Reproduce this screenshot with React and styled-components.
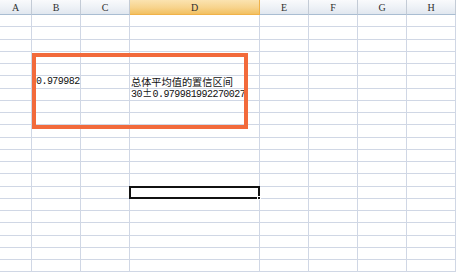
import React from "react";
import styled, { createGlobalStyle } from "styled-components";

const Global = createGlobalStyle`
  html, body { margin: 0; padding: 0; background: #fff; overflow: hidden; }
  * { box-sizing: border-box; }
`;

const Sheet = styled.div`
  position: relative;
  width: 456px;
  height: 273px;
  overflow: hidden;
  background: #fff;
`;

const Grid = styled.div`
  display: grid;
  grid-template-columns: 32px 49px 49px 130px 49px 49px 49px 49px;
  grid-template-rows: 15px repeat(21, 12.25px);
`;

const HeaderCell = styled.div`
  display: flex;
  align-items: center;
  justify-content: center;
  font-family: "Liberation Serif", serif;
  font-size: 10px;
  color: #2f2f2f;
  border-right: 1px solid ${(p) => (p.$active ? "#f0b24a" : "#c3cbd6")};
  border-bottom: 1px solid ${(p) => (p.$active ? "#f0b24a" : "#a9bdd2")};
  background: ${(p) =>
    p.$active
      ? "linear-gradient(#fbe3b0, #f7d38c 55%, #f2c061)"
      : "linear-gradient(#f9fafc, #edf1f6 55%, #e1e7ef)"};
`;

const Cell = styled.div`
  position: relative;
  display: flex;
  align-items: center;
  padding-left: ${(p) => p.$pad}px;
  border-right: 1px solid #d0d7e5;
  border-bottom: 1px solid #d0d7e5;
  white-space: nowrap;
  overflow: visible;
  line-height: 1;
  z-index: ${(p) => (p.$text ? 1 : 0)};
`;

const NumText = styled.span`
  font-family: "Liberation Mono", monospace;
  font-size: 10px;
  letter-spacing: -0.55px;
  line-height: 1;
  color: #111;
`;

const CjkText = styled.span`
  font-family: "Noto Sans CJK SC", sans-serif;
  font-size: 10.2px;
  line-height: 1;
  color: #111;
`;

const PlusMinus = styled.span`
  display: inline-block;
  width: 10.6px;
  text-align: center;
  font-family: "Noto Sans CJK SC", sans-serif;
  font-size: 10px;
  letter-spacing: 0;
`;

const Selection = styled.div`
  position: absolute;
  left: -1px;
  top: -1px;
  right: -1px;
  bottom: -1px;
  border: 2px solid #111;
  pointer-events: none;
`;

const FillHandle = styled.div`
  position: absolute;
  right: -3px;
  bottom: -3px;
  width: 4px;
  height: 4px;
  background: #111;
  border: 1px solid #fff;
`;

const Highlight = styled.div`
  position: absolute;
  left: 32px;
  top: 53px;
  width: 216px;
  height: 76px;
  border: 4px solid #f26a3b;
  pointer-events: none;
  z-index: 2;
`;

const COLS = ["A", "B", "C", "D", "E", "F", "G", "H"];
const ROWS = 21;

function cellContent(r, c) {
  if (r === 6 && c === 1) return <NumText>0.979982</NumText>;
  if (r === 6 && c === 3) return <CjkText>总体平均值的置信区间</CjkText>;
  if (r === 7 && c === 3)
    return (
      <NumText>
        30<PlusMinus>±</PlusMinus>0.979981992270027
      </NumText>
    );
  return null;
}

export default function App() {
  const cells = [];
  for (let r = 1; r <= ROWS; r++) {
    for (let c = 0; c < COLS.length; c++) {
      const content = cellContent(r, c);
      const selected = r === 15 && c === 3;
      cells.push(
        <Cell key={`${r}-${c}`} $text={!!content || selected} $pad={c === 1 ? 4 : 1}>
          {content}
          {selected && (
            <Selection>
              <FillHandle />
            </Selection>
          )}
        </Cell>
      );
    }
  }
  return (
    <>
      <Global />
      <Sheet>
        <Grid>
          {COLS.map((h) => (
            <HeaderCell key={h} $active={h === "D"}>
              {h}
            </HeaderCell>
          ))}
          {cells}
        </Grid>
        <Highlight />
      </Sheet>
    </>
  );
}
